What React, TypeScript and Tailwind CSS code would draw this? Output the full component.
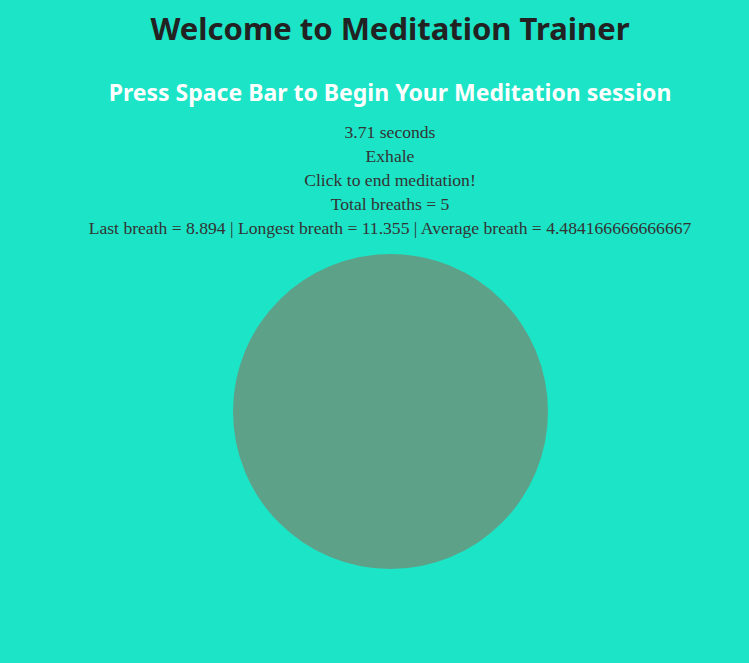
export default function App() {
  const stats = [
    '3.71 seconds',
    'Exhale',
    'Click to end meditation!',
    'Total breaths = 5',
    'Last breath = 8.894 | Longest breath = 11.355 | Average breath = 4.484166666666667',
  ];

  return (
    <div className="min-h-[663px] w-full overflow-hidden bg-[#1ce4c6]">
      <div className="flex w-[780px] flex-col items-center text-center">
        <h1 className="mt-[9px] font-['Noto_Sans',sans-serif] text-[31px] leading-[38px] font-bold text-[#222]">
          Welcome to Meditation Trainer
        </h1>
        <h2 className="mt-[30px] font-['Noto_Sans',sans-serif] text-[23px] leading-[30px] font-bold text-white">
          Press Space Bar to Begin Your Meditation session
        </h2>
        <div className="mt-[13px] font-['Liberation_Serif',serif] text-[17.6px] leading-[24px] text-[#333]">
          {stats.map((line) => (
            <p key={line}>{line}</p>
          ))}
        </div>
        <div className="mt-[14px] h-[315px] w-[315px] rounded-full bg-[#5ea189]" />
      </div>
    </div>
  );
}
